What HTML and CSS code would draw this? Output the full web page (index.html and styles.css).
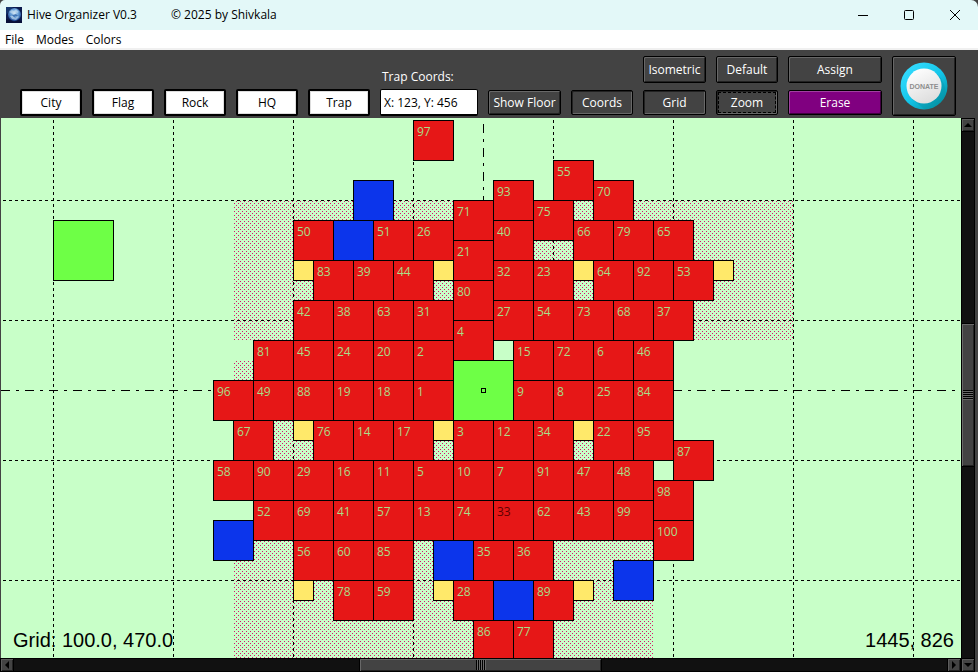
FILE: index.html
```html
<!DOCTYPE html>
<html lang="en">
<head>
<meta charset="utf-8">
<title>Hive Organizer V0.3</title>
<link rel="stylesheet" href="styles.css">
</head>
<body>
<header class="titlebar">
  <svg class="app-icon" width="16" height="16" viewBox="0 0 16 16" aria-hidden="true">
    <defs>
      <radialGradient id="globe" cx="0.5" cy="0.4" r="0.6">
        <stop offset="0" stop-color="#d5e8f6"/><stop offset="0.45" stop-color="#6ea6dc"/><stop offset="1" stop-color="#1c4a94"/>
      </radialGradient>
    </defs>
    <rect width="16" height="16" fill="#0b1a4c"/>
    <path d="M0 0h7L0 8z" fill="#15356c"/>
    <circle cx="8.500" cy="7.500" r="6.500" fill="url(#globe)"/>
    <path d="M3 5l3-2 2 1 2-2 3 3-2 1-1-1-2 2-3-1zM4 9l3 0 2 2 3-2 1 1-3 3-4-1z" fill="#c9dff0" opacity=".6"/>
    <path d="M5 7l2 1 3-1 2 2-2 0-2 1z" fill="#24559e" opacity=".7"/>
    <path d="M0 12l4 1 4 2 5-2 3 1v2H0z" fill="#071038"/>
  </svg>
  <h1 class="app-name">Hive Organizer V0.3</h1>
  <span class="copyright">© 2025 by Shivkala</span>
  <div class="window-controls">
    <button class="window-button" aria-label="Minimize"><svg width="12" height="12" viewBox="0 0 12 12"><path d="M1 6.500h10"/></svg></button>
    <button class="window-button" aria-label="Maximize"><svg width="12" height="12" viewBox="0 0 12 12"><rect x="1.500" y="1.500" width="9" height="9" rx="1"/></svg></button>
    <button class="window-button" aria-label="Close"><svg width="12" height="12" viewBox="0 0 12 12"><path d="M1 1l10 10M11 1L1 11"/></svg></button>
  </div>
</header>

<nav class="menubar">
  <button class="menu">File</button>
  <button class="menu">Modes</button>
  <button class="menu">Colors</button>
</nav>

<section class="toolbar">
  <button class="tool light">City</button>
  <button class="tool light">Flag</button>
  <button class="tool light">Rock</button>
  <button class="tool light">HQ</button>
  <button class="tool light">Trap</button>
  <div class="field">
    <label for="trap">Trap Coords:</label>
    <input id="trap" type="text" value="X: 123, Y: 456">
  </div>
  <button class="tool dark low floor">Show Floor</button>
  <button class="tool dark low pressed">Coords</button>
  <div class="stack views">
    <button class="tool dark">Isometric</button>
    <button class="tool dark low pressed">Grid</button>
  </div>
  <div class="stack">
    <button class="tool dark">Default</button>
    <button class="tool dark low pressed focused">Zoom</button>
  </div>
  <div class="stack wide">
    <button class="tool dark">Assign</button>
    <button class="tool dark low erase">Erase</button>
  </div>
  <button class="donate" aria-label="Donate">
    <svg width="48" height="48" viewBox="0 0 48 48">
      <defs>
        <linearGradient id="ring" x1="0.1" y1="0.1" x2="0.8" y2="0.9">
          <stop offset="0" stop-color="#35dcff"/><stop offset="0.55" stop-color="#14c6ea"/><stop offset="1" stop-color="#0599ac"/>
        </linearGradient>
        <linearGradient id="knob" x1="0.2" y1="0" x2="0.7" y2="1">
          <stop offset="0" stop-color="#ffffff"/><stop offset="1" stop-color="#dcdcdc"/>
        </linearGradient>
      </defs>
      <circle cx="24" cy="24" r="23.500" fill="url(#ring)"/>
      <path d="M12 37L37 12A23 23 0 0 1 45 34A23 23 0 0 1 24 47Z" fill="#078fa2" opacity=".35"/>
      <circle cx="24" cy="24" r="17.500" fill="url(#knob)"/>
      <text x="24" y="27" class="donate-text">DONATE</text>
    </svg>
  </button>
</section>

<main class="workspace">
  <div class="map-area">
    <svg class="map" id="map" role="img" aria-label="Hive map"></svg>
    <output class="readout">Grid: 100.0, 470.0</output>
    <output class="readout right">1445, 826</output>
  </div>
  <div class="scrollbar vertical">
    <button class="arrow" aria-label="Scroll up"><svg width="8" height="8" viewBox="0 0 8 8"><path d="M4 2l4 4H0z"/></svg></button>
    <span class="trough"></span><span class="thumb"><i class="grip"></i></span><span class="trough"></span>
  </div>
  <div class="scrollbar horizontal">
    <button class="arrow" aria-label="Scroll left"><svg width="8" height="8" viewBox="0 0 8 8"><path d="M2 4l4-4v8z"/></svg></button>
    <span class="trough"></span><span class="thumb"><i class="grip"></i></span><span class="trough"></span>
    <button class="arrow" aria-label="Scroll right"><svg width="8" height="8" viewBox="0 0 8 8"><path d="M6 4L2 0v8z"/></svg></button>
  </div>
  <button class="arrow" aria-label="Scroll down"><svg width="8" height="8" viewBox="0 0 8 8"><path d="M4 6l4-4H0z"/></svg></button>
</main>
<script src="map.js"></script>
</body>
</html>
```
FILE: styles.css
```css
* { box-sizing: border-box; }

body {
  margin: 0;
  min-height: 100vh;
  display: flex;
  flex-direction: column;
  background: #434343;
  color: #000;
  font: 12px/16px "Open Sans", "Noto Sans", sans-serif;
}

button, input {
  font: inherit;
  color: inherit;
  padding: 0;
  margin: 0;
  border: 0;
  background: none;
}

/* title bar */
.titlebar {
  display: flex;
  align-items: center;
  height: 30px;
  padding-left: 6px;
  background: #e3f8f8;
  border-radius: 5px 7px 0 0;
}
.app-icon { margin-right: 5px; }
.app-name { margin: 0; width: 144px; font-size: 12px; font-weight: 400; }
.window-controls { display: flex; margin-left: auto; }
.window-button { display: flex; align-items: center; justify-content: center; width: 46px; height: 30px; }
.window-button svg { fill: none; stroke: #000; stroke-width: 1; }

/* menus */
.menubar {
  display: flex;
  gap: 12px;
  height: 20px;
  padding: 2px 5px 0;
  background: #fff;
  border-bottom: 2px solid #f0f0f0;
}

/* toolbar */
.toolbar {
  display: flex;
  align-items: flex-end;
  gap: 10px;
  height: 68px;
  padding: 0 22px 2px 20px;
}
.tool { width: 62px; height: 27px; flex: none; border-radius: 2px; text-align: center; white-space: nowrap; }
.light { background: #fff; border: 2px solid #000; box-shadow: inset 0 0 0 1px #ddd; }
.dark {
  color: #fff;
  background: #434343;
  border: 1px solid #000;
  box-shadow: inset 1px 1px #686868, inset -1px -1px #222;
}
.low { height: 25px; margin-bottom: 1px; }
.pressed { box-shadow: inset 1px 1px #222, inset -1px -1px #686868; }
.focused { outline: 1px dashed #000; outline-offset: -3px; }
.floor { width: 73px; }
.field { display: flex; flex-direction: column; width: 98px; flex: none; gap: 4px; }
.field label { padding-left: 2px; color: #fff; }
.field input { width: 100%; height: 27px; padding-left: 3px; background: #fff; border: 1px solid #000; border-bottom-width: 2px; border-radius: 2px; }
.stack { display: flex; flex-direction: column; gap: 7px; width: 62px; }
.stack .tool { width: 100%; }
.views { width: 63px; }
.wide { width: 94px; }
.erase { background: #800080; box-shadow: inset 1px 1px #a040a0, inset -1px -1px #400040; }
.donate {
  display: flex;
  align-items: center;
  justify-content: center;
  width: 64px;
  height: 60px;
  border: 1px solid #000;
  border-radius: 2px;
  box-shadow: inset 1px 1px #686868, inset -1px -1px #222;
}
.donate-text { font: bold 7px "Liberation Sans Narrow", "Liberation Sans", sans-serif; fill: #8e8e8e; text-anchor: middle; }

/* map and scrollbars */
.workspace {
  flex: 1;
  display: grid;
  grid-template-columns: minmax(0, 1fr) 14px;
  grid-template-rows: minmax(0, 1fr) 14px;
  padding-right: 3px;
}
.map-area { position: relative; margin-left: 1px; overflow: hidden; background: #c8ffc8; }
.map { position: absolute; inset: 0; width: 100%; height: 100%; }
.readout { position: absolute; left: 12px; bottom: 7px; font: 20px/22px "Liberation Sans", sans-serif; }
.readout.right { left: auto; right: 7px; }

.line { stroke: #000; fill: none; stroke-dasharray: 3 3; }
.line.axis { stroke-dasharray: 9 6 3 6; }
.tile { stroke: #000; }
.city { fill: #e61717; }
.rock { fill: #0c35eb; }
.flag { fill: #ffe96a; }
.base { fill: #6eff46; }
.number { fill: #a9de88; font: 12px "Open Sans", "Noto Sans", sans-serif; }
.number.marked { fill: #600000; }

.scrollbar { display: flex; background: #111; }
.vertical { flex-direction: column; }
.trough { flex: 192; border: solid #000; border-width: 0 1px; }
.thumb {
  flex: 142;
  display: flex;
  align-items: center;
  justify-content: center;
  background: #434343;
  border: 1px solid #000;
  box-shadow: inset 1px 1px #686868, inset -1px -1px #222;
}
.horizontal .trough { flex: 346; border-width: 1px 0; }
.horizontal .thumb { flex: 241; }
.grip { width: 10px; height: 10px; background: repeating-linear-gradient(#000 0 1px, #686868 1px 2px); }
.horizontal .grip { background: repeating-linear-gradient(90deg, #000 0 1px, #686868 1px 2px); }
.arrow {
  display: flex;
  align-items: center;
  justify-content: center;
  flex: none;
  width: 14px;
  height: 14px;
  background: #434343;
  border: 1px solid #000;
  box-shadow: inset 1px 1px #5c5c5c, inset -1px -1px #222;
}
```
FILE: map.js
```js
// Each row: y, then x:label pairs. Labels: number = city, r = rock, f = flag, b = base.
const rows = [
  "2 412:97",
  "42 552:55",
  "62 352:r 492:93 592:70",
  "82 452:71 532:75",
  "102 52:b 292:50 332:r 372:51 412:26 492:40 572:66 612:79 652:65",
  "122 452:21",
  "142 292:f 312:83 352:39 392:44 432:f 492:32 532:23 572:f 592:64 632:92 672:53 712:f",
  "162 452:80",
  "182 292:42 332:38 372:63 412:31 492:27 532:54 572:73 612:68 652:37",
  "202 452:4",
  "222 252:81 292:45 332:24 372:20 412:2 512:15 552:72 592:6 632:46",
  "242 452:b",
  "262 212:96 252:49 292:88 332:19 372:18 412:1 512:9 552:8 592:25 632:84",
  "302 232:67 292:f 312:76 352:14 392:17 432:f 452:3 492:12 532:34 572:f 592:22 632:95",
  "322 672:87",
  "342 212:58 252:90 292:29 332:16 372:11 412:5 452:10 492:7 532:91 572:47 612:48",
  "362 652:98",
  "382 252:52 292:69 332:41 372:57 412:13 452:74 492:33 532:62 572:43 612:99",
  "402 212:r 652:100",
  "422 292:56 332:60 372:85 432:r 472:35 512:36",
  "442 612:r",
  "462 292:f 332:78 372:59 432:f 452:28 492:r 532:89 572:f",
  "502 472:86 512:77"
];
const kinds = { r: ["rock", 40], f: ["flag", 20], b: ["base", 60] };
const out = [`<defs><pattern id="dots" width="4" height="4" patternUnits="userSpaceOnUse">
  <path d="M1 1h1v1h-1zM3 3h1v1h-1z" fill="#d8126c"/></pattern></defs>`];

// Territory: x, y, width, height
for (const [x, y, w, h] of [[233, 83, 560, 139], [233, 243, 420, 139], [233, 403, 420, 139]])
  out.push(`<rect x="${x}" y="${y}" width="${w}" height="${h}" fill="url(#dots)"/>`);

for (const x of [52, 172, 292, 412, 552, 672, 792, 912])
  out.push(`<path class="line" d="M${x + 0.5} 2V4000"/>`);
for (const y of [82, 202, 342, 462])
  out.push(`<path class="line" d="M2 ${y + 0.5}H4000"/>`);
out.push('<path class="line axis" d="M482.5 6V4000"/><path class="line axis" d="M0 272.5H4000"/>');

for (const row of rows) {
  const [y, ...items] = row.split(" ");
  for (const item of items) {
    const [x, label] = item.split(":");
    const [kind, size] = kinds[label] || ["city", 40];
    out.push(`<rect class="tile ${kind}" x="${+x + 0.5}" y="${+y + 0.5}" width="${size}" height="${size}"/>`);
    if (kind === "city")
      out.push(`<text class="number${label === "33" ? " marked" : ""}" x="${+x + 4}" y="${+y + 16}">${label}</text>`);
  }
}
out.push('<rect x="480.5" y="270.5" width="4" height="4" fill="none" stroke="#000"/>');
document.getElementById("map").innerHTML = out.join("");
```
